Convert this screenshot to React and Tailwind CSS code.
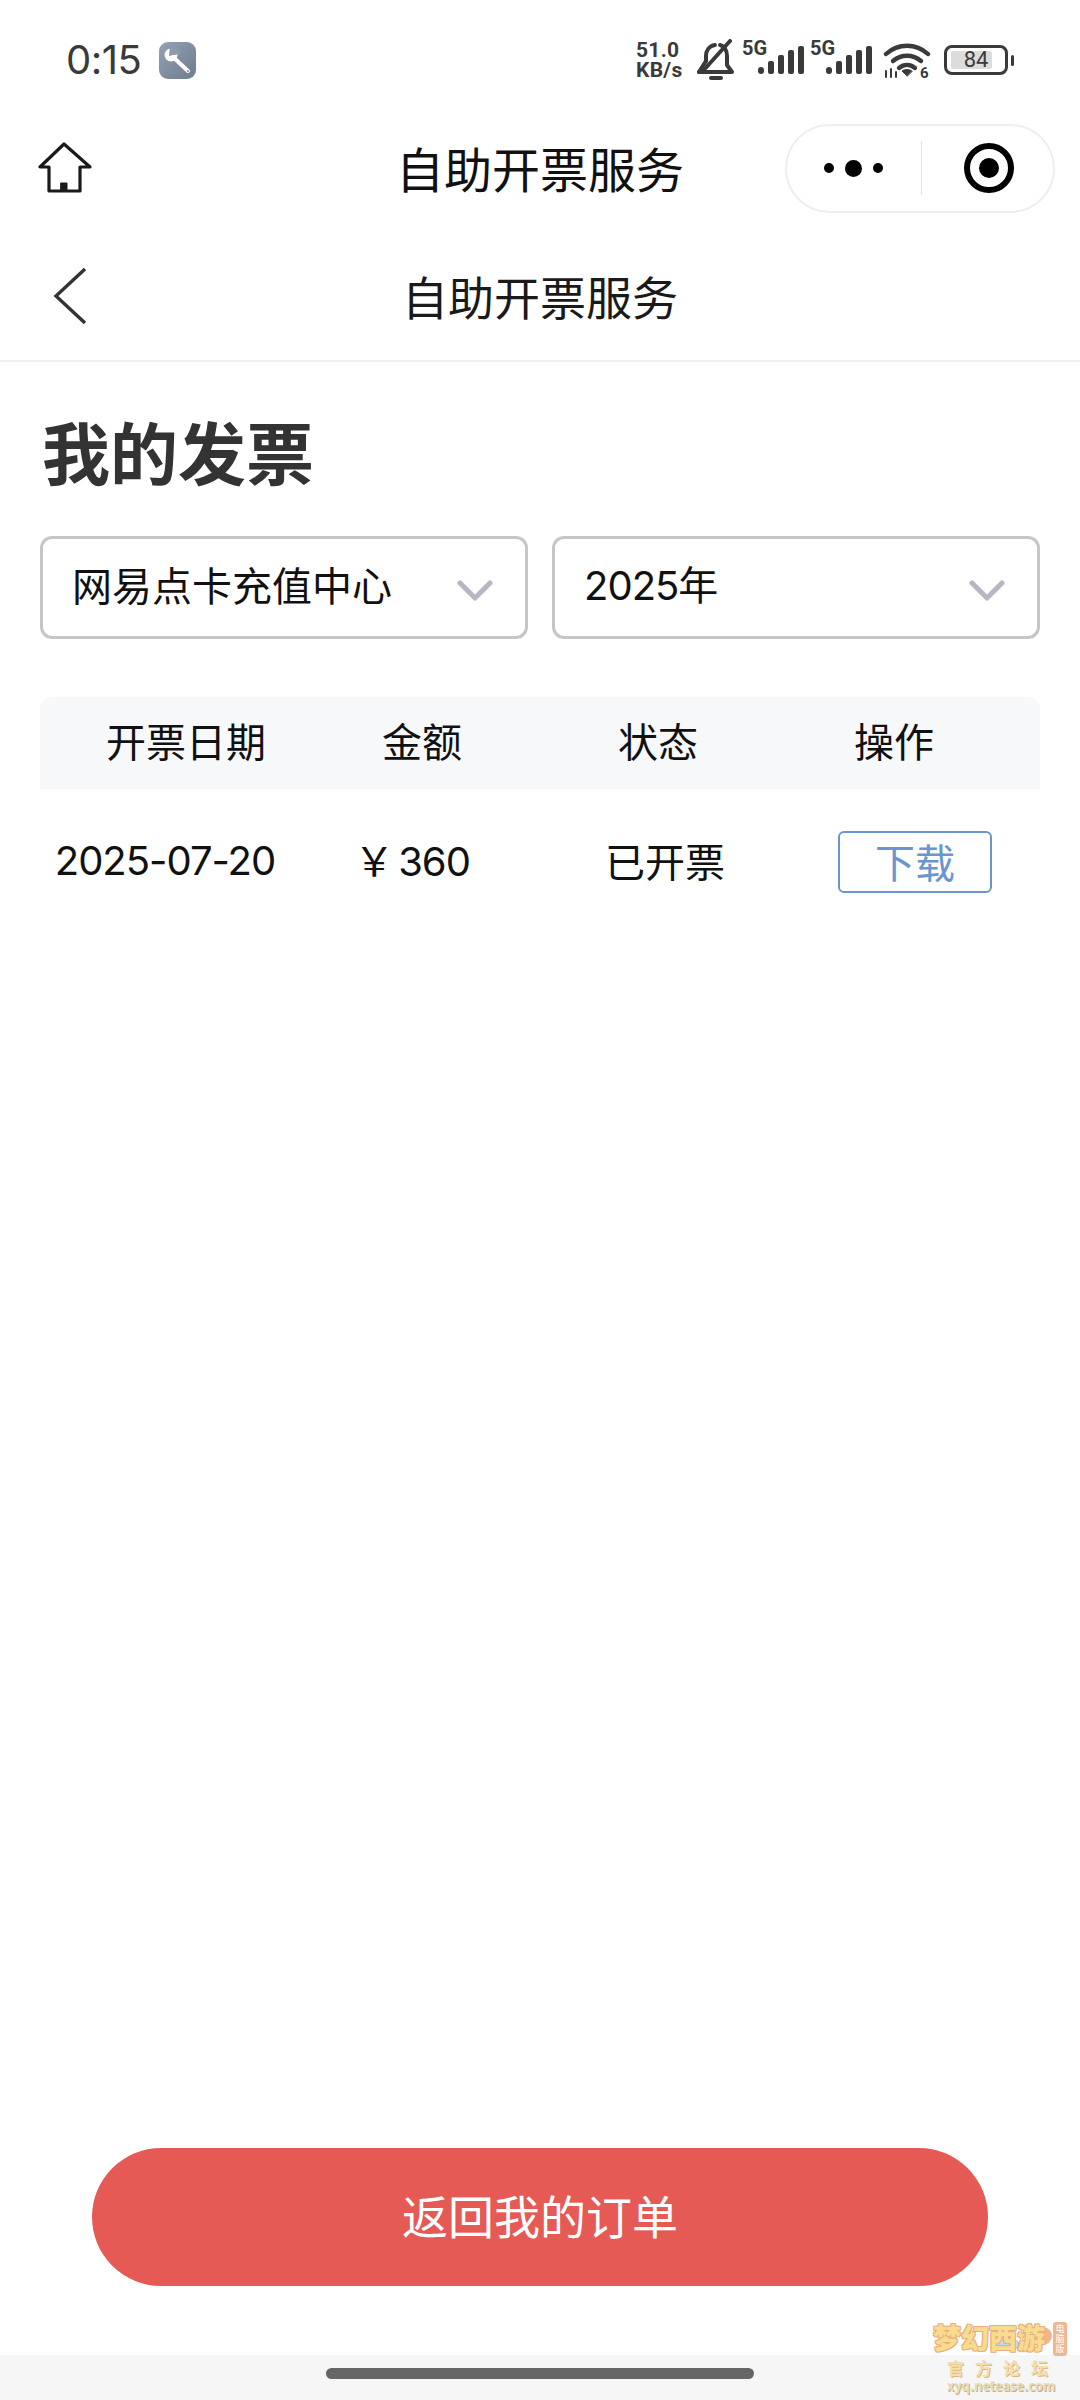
import React from 'react';

const cjk = "font-['Noto_Sans_CJK_SC','Noto_Sans',sans-serif]";
const num = "font-['Inter','Noto_Sans_CJK_SC',sans-serif] text-[40px] tracking-[-1px]";

const SignalBars = () => (
  <div className="relative w-[62px] h-[44px]">
    <span className="absolute left-0 top-[-1px] text-[20px] leading-[22px] font-bold text-[#3a3a3a] font-['Roboto',sans-serif]">5G</span>
    <svg className="absolute left-[16px] top-[8px]" width="46" height="28" viewBox="0 0 46 28" fill="#3a3a3a">
      <rect x="0" y="21" width="6" height="7" rx="3" />
      <rect x="10" y="15" width="6" height="13" rx="2" />
      <rect x="20" y="9" width="6" height="19" rx="2" />
      <rect x="30" y="4" width="6" height="24" rx="2" />
      <rect x="40" y="0" width="6" height="28" rx="2" />
    </svg>
  </div>
);

const StatusBar = () => (
  <div className="h-[120px] flex items-center justify-between pl-[66px] pr-[66px]">
    <div className="flex items-center gap-[19px]">
      <span className="text-[40px] leading-none text-[#3a3a3a] font-['Inter',sans-serif] w-[74px] whitespace-nowrap tracking-[-0.5px]">0:15</span>
      <div className="w-[37px] h-[37px] rounded-[9px] bg-gradient-to-br from-[#94a2b5] to-[#6f7c90]">
        <svg className="block" width="37" height="37" viewBox="0 0 37 37">
          <circle cx="12" cy="13" r="6.5" fill="white" />
          <path d="M10 14L11 3h4l7 6-1 3z" fill="#8d9aac" />
          <path d="M14 15l15 14" stroke="white" strokeWidth="4" strokeLinecap="round" />
          <circle cx="29" cy="29" r="1" fill="#7d8a9d" />
        </svg>
      </div>
    </div>
    <div className="flex items-center">
      <div className="w-[52px] text-[#3a3a3a] font-['Roboto',sans-serif] font-bold text-[21px] leading-[20px] tracking-[0.3px] mr-[9px] whitespace-nowrap">
        <div>51.0</div>
        <div>KB/s</div>
      </div>
      <svg className="mr-[7px]" width="38" height="42" viewBox="0 0 38 42" fill="none" stroke="#3a3a3a" strokeWidth="4" strokeLinecap="round" strokeLinejoin="round">
        <path d="M2 33h33l-5-7v-9c0-6-3-10-7-11" />
        <path d="M9 22v-5c0-5 3-10 9-11" />
        <path d="M9 22l-7 11" />
        <path d="M33 2L5 33" />
        <path d="M14 39h10" />
      </svg>
      <SignalBars />
      <div className="w-[6px]" />
      <SignalBars />
      <svg className="ml-[11px] mt-[4px]" width="48" height="42" viewBox="0 0 48 42" fill="none" stroke="#3a3a3a" strokeWidth="4.4" strokeLinecap="round">
        <path d="M3 13c12-11 30-11 42 0" />
        <path d="M10 20c8-7 20-7 28 0" />
        <path d="M16 27c5-4 11-4 16 0" />
        <path d="M24 35l-5-5c3-2 7-2 10 0z" fill="#3a3a3a" strokeWidth="1" strokeLinejoin="round" />
        <path d="M3 36v-6M8 36v-8M13 36v-5" strokeWidth="2" />
        <text x="37" y="37" fontSize="15" fontWeight="700" fill="#3a3a3a" stroke="none" fontFamily="Roboto, sans-serif">6</text>
      </svg>
      <div className="ml-[13px] flex items-center">
        <div className="relative w-[64px] h-[30px] rounded-[8px] border-[3px] border-[#3a3a3a] flex items-center justify-center overflow-hidden">
          <div className="absolute left-[4px] top-[3px] bottom-[3px] w-[41px] rounded-[2px] bg-[#dcdcdc]" />
          <span className="relative text-[22px] leading-none text-[#3a3a3a] font-['Roboto',sans-serif]">84</span>
        </div>
        <div className="ml-[3px] w-[3px] h-[11px] rounded-full bg-[#3a3a3a]" />
      </div>
    </div>
  </div>
);

const CapsuleNav = () => (
  <div className="h-[96px] grid grid-cols-[1fr_auto_1fr] items-center">
    <div className="pl-[38px]">
      <svg className="block" width="54" height="52" viewBox="0 0 54 52" fill="none" stroke="#1a1a1a" strokeWidth="3.2" strokeLinecap="round" strokeLinejoin="round">
        <path d="M26 2L2 25h9v24h31V25h10z" />
        <rect x="23" y="41" width="6" height="7" fill="#1a1a1a" strokeWidth="1" />
      </svg>
    </div>
    <div className={`${cjk} text-[48px] leading-none text-[#111] -mt-[3px]`}>自助开票服务</div>
    <div className="flex justify-end pr-[25px]">
      <div className="w-[270px] h-[89px] rounded-full border-2 border-[#eeeeee] flex items-center">
        <div className="w-[134px] pr-[2px] flex items-center justify-center gap-[11px]">
          <span className="w-[10px] h-[10px] rounded-full bg-black" />
          <span className="w-[17px] h-[17px] rounded-full bg-black" />
          <span className="w-[10px] h-[10px] rounded-full bg-black" />
        </div>
        <div className="w-[1px] h-[54px] bg-[#e5e5e5]" />
        <div className="flex-1 pl-[2px] flex items-center justify-center">
          <div className="w-[50px] h-[50px] rounded-full border-[6px] border-black flex items-center justify-center">
            <span className="w-[20px] h-[20px] rounded-full bg-black" />
          </div>
        </div>
      </div>
    </div>
  </div>
);

const PageHeader = () => (
  <div className="h-[146px] pt-[16px] grid grid-cols-[1fr_auto_1fr] items-center border-b-2 border-[#f0f0f0]">
    <div className="pl-[52px]">
      <svg className="block" width="36" height="58" viewBox="0 0 36 58" fill="none" stroke="#333" strokeWidth="3.4">
        <path d="M33 2L4 29l29 27" />
      </svg>
    </div>
    <div className={`${cjk} text-[46px] leading-none text-[#1a1a1a] -mt-[2px]`}>自助开票服务</div>
    <div />
  </div>
);

const SelectBox = ({ children }) => (
  <div className="flex-1 h-[103px] rounded-[12px] border-[3px] border-[#c6c6ca] flex items-center justify-between pl-[29px] pr-[32px]">
    <span className={`${cjk} text-[40px] leading-none text-[#111] -mt-[7px]`}>{children}</span>
    <svg className="mt-[6px]" width="36" height="22" viewBox="0 0 36 22" fill="none" stroke="#b6b7c2" strokeWidth="5" strokeLinecap="round" strokeLinejoin="round">
      <path d="M3 3l15 15L33 3" />
    </svg>
  </div>
);

const InvoiceTable = () => (
  <div className={`${cjk} mt-[58px] mx-[40px] text-[#111]`}>
    <div className="h-[92px] px-[28px] pb-[7px] rounded-t-[12px] bg-[#f7f8fa] grid grid-cols-4 items-center text-center text-[40px] leading-none">
      <span>开票日期</span>
      <span>金额</span>
      <span>状态</span>
      <span>操作</span>
    </div>
    <div className="h-[146px] grid grid-cols-4 items-center text-center text-[40px] leading-none">
      <span className={`${num} whitespace-nowrap -mt-[2px]`}>2025-07-20</span>
      <span className="whitespace-nowrap pr-[6px] -mt-[3px]">￥<span className={`${num} ml-[4px]`}>360</span></span>
      <span className="-mt-[4px]">已开票</span>
      <div className="flex justify-center">
        <button className="w-[154px] h-[62px] pb-[2px] rounded-[6px] border-2 border-[#6a96d0] text-[#6a96d0] text-[40px] leading-none">下载</button>
      </div>
    </div>
  </div>
);

// forum watermark in the bottom right corner
const Watermark = () => (
  <div className={`${cjk} absolute left-[933px] top-[2316px] w-[136px] h-[78px] opacity-85 pointer-events-none`}>
    <svg className="absolute left-[56px] top-[8px]" width="68" height="32" viewBox="0 0 68 32">
      <path d="M2 24c0-6 5-7 7-6 1-6 11-8 14-2 5-1 8 3 7 8z" fill="#a9d6ee" stroke="#7fb6da" strokeWidth="1" />
      <circle cx="54" cy="12" r="9" fill="#f3a878" />
    </svg>
    <div className="relative flex items-start">
      <span className="text-[28px] leading-[42px] font-black whitespace-nowrap text-[#f7d67a] [text-shadow:1px_1px_0_#e6a06c,-1px_-1px_0_#e6a06c,1px_-1px_0_#e6a06c,-1px_1px_0_#e6a06c]">梦幻西游</span>
      <span className="absolute right-[2px] top-[6px] w-[14px] rounded-[3px] bg-[#ecaa82] text-white text-[9px] leading-[10px] text-center py-[2px]">电脑版</span>
    </div>
    <div className="pl-[14px] text-[17px] leading-[20px] font-bold tracking-[11px] whitespace-nowrap text-[#f3dc9a] [text-shadow:1px_1px_0_#dfa878]">官方论坛</div>
    <div className="pl-[14px] text-[13px] leading-[16px] font-bold whitespace-nowrap text-[#e9d9a8] [text-shadow:1px_1px_0_#b9a27c]">xyq.netease.com</div>
  </div>
);

export default function App() {
  return (
    <div className="relative w-[1080px] h-[2400px] bg-white flex flex-col overflow-hidden">
      <StatusBar />
      <CapsuleNav />
      <PageHeader />
      <div className="flex-1 flex flex-col">
        <h1 className={`${cjk} mt-[55px] ml-[42px] text-[68px] leading-[68px] font-bold text-[#333]`}>我的发票</h1>
        <div className="mt-[51px] mx-[40px] flex gap-[24px]">
          <SelectBox>网易点卡充值中心</SelectBox>
          <SelectBox><span className={num}>2025</span>年</SelectBox>
        </div>
        <InvoiceTable />
        <div className="mt-auto mb-[69px] mx-[92px]">
          <button className={`${cjk} w-full h-[138px] rounded-full bg-[#e55a55] text-white text-[46px] leading-none pb-[6px]`}>返回我的订单</button>
        </div>
      </div>
      <div className="h-[45px] bg-[#f6f6f6] flex justify-center pt-[13px]">
        <div className="w-[428px] h-[11px] rounded-full bg-[#666666]" />
      </div>
      <Watermark />
    </div>
  );
}
